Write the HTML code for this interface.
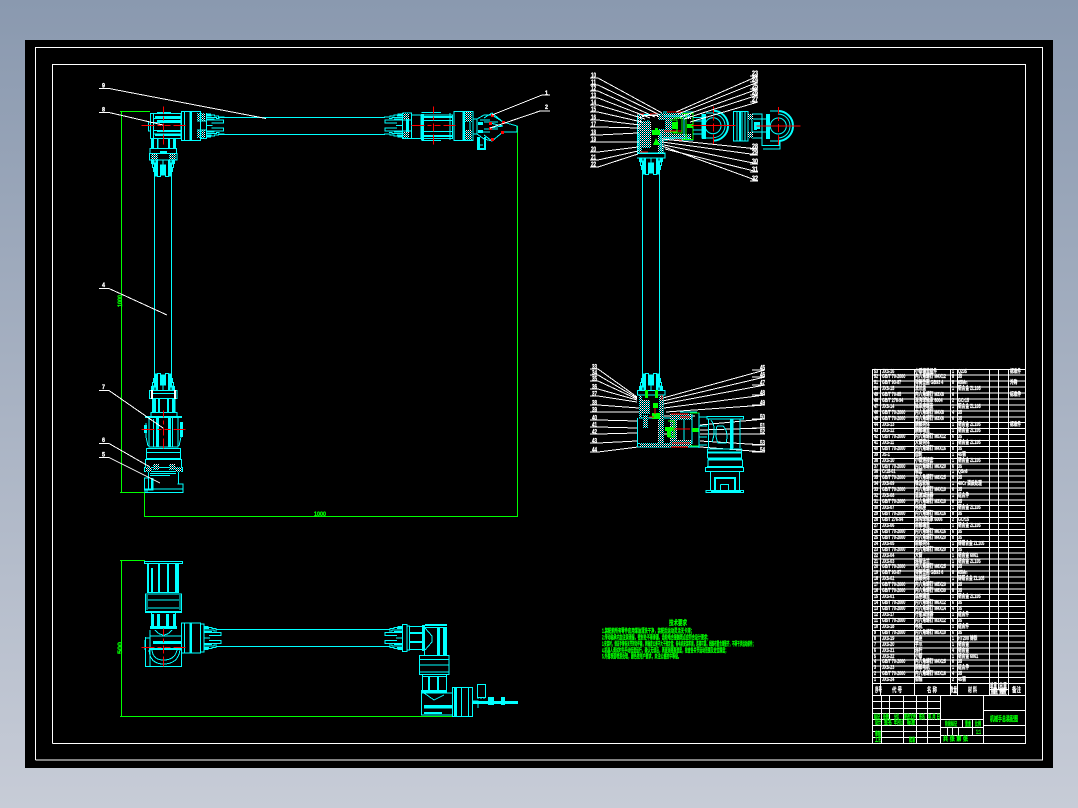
<!DOCTYPE html>
<html lang="zh"><head><meta charset="utf-8"><title>机械手总装配图</title>
<style>
html,body{margin:0;padding:0;width:1078px;height:808px;overflow:hidden;background:linear-gradient(#8a99af,#c7ccd7)}
svg{position:absolute;left:0;top:0}
.c{fill:none;stroke:#0ff;stroke-width:1}
.c2{fill:none;stroke:#0ff;stroke-width:2}
.f{fill:#0ff}
.w{fill:none;stroke:#fff;stroke-width:1}
.r{fill:none;stroke:#f00;stroke-width:1}
.g{fill:none;stroke:#0f0;stroke-width:1}
text{font-family:"Liberation Sans","Noto Sans CJK SC",sans-serif;font-weight:bold}
.l{fill:#fff;font-size:7px;stroke:#fff;stroke-width:.3px}
.s{fill:#fff;font-size:6px;stroke:#fff;stroke-width:.3px}
.t{fill:#0f0;font-size:6px;stroke:#0f0;stroke-width:.25px}
.h{fill:#fff;font-size:7px;stroke:#fff;stroke-width:.2px}
pre{position:absolute;margin:0;color:#fff;-webkit-text-stroke:.25px #fff;font:bold 5.4px/5.932px "Liberation Sans","Noto Sans CJK SC",sans-serif;transform:scaleX(.68);transform-origin:0 0;top:369.5px}
</style></head><body>
<svg width="1078" height="808" viewBox="0 0 1078 808" shape-rendering="crispEdges">
<defs>
<pattern id="ck" width="2" height="2" patternUnits="userSpaceOnUse"><rect width="2" height="2" fill="#000"/><rect width="1" height="1" fill="#fff"/><rect x="1" y="1" width="1" height="1" fill="#0ff"/></pattern>
<g id="fin">
<path class="c" d="M0-11.5H4V-10.5H8V-9.5H12V-8.5H18M0 11.5H4V10.5H8V9.5H12V8.5H18"/>
<path class="c" d="M0-8H10V-7H13M0 8H10V7H13M0-5.5H17V-2.5H5M0 5.5H17V2.5H5M0 0H6"/>
<rect class="f" x="0" y="-11" width="5" height="2"/><rect class="f" x="0" y="9" width="5" height="2"/>
<rect class="f" x="0" y="-7" width="8" height="1"/><rect class="f" x="0" y="6" width="8" height="1"/>
</g>
<g id="finb">
<use href="#fin"/>
<rect class="f" x="3" y="-9" width="14" height="3"/><rect class="f" x="3" y="6" width="14" height="3"/>
<rect class="f" x="5" y="-2" width="11" height="4"/>
</g>
<g id="boxh">
<rect class="c" x="0" y="0" width="19" height="29"/>
<path class="c" d="M3 0V29M8.5 0V29M10 0V29"/>
<rect class="f" x="8" y="0" width="2" height="29"/>
</g>
<g id="cross"><path class="r" d="M-22 0H-9M-6 0H-2M1 0H7M10 0H22M0-19V-12M0-9V-5M0-2V6M0 9V19"/></g>
</defs>

<rect x="25" y="40" width="1028" height="728" fill="#000"/>
<path class="w" d="M35.5 760V47.5H1042.5V760H35.5M52.5 743.5V64.5H1025.5V743.5H52.5"/>

<!-- dimension lines -->
<path class="g" d="M120 111.5H150M121.5 111V492.5M120 492.5H150M144.5 492V516.5H517.5V126M120 560.5H145M121.5 560V716.5M120 716.5H462"/>
<text class="t" x="0" y="0" transform="translate(122,307) rotate(-90)" textLength="12" lengthAdjust="spacingAndGlyphs">1000</text>
<text class="t" x="314" y="516" textLength="12" lengthAdjust="spacingAndGlyphs">1000</text>
<text class="t" x="0" y="0" transform="translate(122,654) rotate(-90)" textLength="12" lengthAdjust="spacingAndGlyphs">500</text>

<!-- ============ VIEW 1 ============ -->
<path class="c" d="M218 117.5H385M218 134.5H385M154.5 175V373M171.5 175V373"/>
<!-- left elbow -->
<path class="c" d="M150.5 113.5H181V138.5H150.5ZM153.5 113.5V138.5M148.5 122V131H150M153 118.5H181M153 122.5H181M153 130.5H181M153 134H181M157 112.5H171"/>
<rect class="f" x="155" y="116" width="26" height="2"/><rect class="f" x="157" y="120" width="24" height="2"/><rect class="f" x="157" y="130" width="24" height="2"/><rect class="f" x="155" y="134" width="26" height="2"/>
<use href="#boxh" transform="translate(181.5,111.5)"/>
<rect fill="url(#ck)" x="197" y="113" width="8" height="8"/><rect fill="url(#ck)" x="197" y="130" width="8" height="8"/>
<path class="c" d="M200.5 113V138.5H206.5V113M197 121H206M197 130H206"/>
<use href="#fin" transform="translate(206.5,125.7)"/>
<!-- neck -->
<path class="c" d="M151.5 139V148M175.5 139V148M158 139V148M169 139V148M150 148.5H176.5V153.5H150ZM149.5 153.5H177V160H149.5Z"/>
<rect class="f" x="151" y="139" width="3" height="9"/><rect class="f" x="157" y="139" width="1" height="9"/><rect class="f" x="168" y="139" width="2" height="9"/><rect class="f" x="173" y="139" width="2" height="9"/><rect class="f" x="160" y="151" width="7" height="2"/>
<rect fill="url(#ck)" x="151" y="154" width="7" height="6"/><rect fill="url(#ck)" x="169" y="154" width="7" height="6"/>
<use href="#finb" transform="translate(163,159.5) rotate(90)"/>
<!-- cross -->
<use href="#cross" transform="translate(163.5,125.5)"/>

<!-- right end -->
<use href="#fin" transform="translate(402,125.7) scale(-1,1)"/>
<path class="c" d="M402.5 113V138.5H411.5V113H402.5M402 120H412M402 131H412"/>
<rect class="f" x="406" y="113" width="3" height="26"/>
<rect fill="url(#ck)" x="403" y="113" width="6" height="6"/><rect fill="url(#ck)" x="403" y="132" width="6" height="6"/>
<path class="c" d="M412 115H452.5V138.5H412M421.5 112.5H441M421.5 140.5H441M421 115V138M423 115V138M450 113V140"/>
<rect class="f" x="421" y="114" width="3" height="26"/><rect class="f" x="424" y="116" width="28" height="2"/><rect class="f" x="424" y="120" width="28" height="1"/><rect class="f" x="424" y="131" width="28" height="1"/><rect class="f" x="424" y="135" width="28" height="2"/>
<use href="#boxh" transform="translate(473,111.5) scale(-1,1)"/>
<rect fill="url(#ck)" x="465" y="112" width="7" height="10"/><rect fill="url(#ck)" x="465" y="130" width="7" height="10"/>
<!-- gripper -->
<path class="c" d="M473 119H477V134H473M477 119L484 115H492L503 122L517 126V132L503 132L492 141L484 139L477 134M484 118L492 113L503 122M484 135L492 141L503 132M490 123L503 126L490 128M480 120H490M480 132H490M484 122H498M484 129H498"/>
<path class="c" d="M477.5 137V149.5H485.5V137M480 145H483"/>
<rect class="f" x="478" y="137" width="2" height="12"/><rect class="f" x="484" y="137" width="2" height="12"/><rect class="f" x="478" y="148" width="8" height="2"/><rect class="f" x="478" y="122" width="5" height="3"/><rect class="f" x="478" y="130" width="5" height="3"/>
<g fill="#f00"><rect x="491" y="114" width="3" height="3"/><rect x="502" y="121" width="3" height="3"/><rect x="489" y="122" width="3" height="3"/><rect x="489" y="127" width="3" height="3"/><rect x="501" y="131" width="3" height="3"/><rect x="491" y="138" width="3" height="3"/></g>
<use href="#cross" transform="translate(433.5,125.5)"/>

<!-- lower column view 1 -->
<use href="#finb" transform="translate(163,390.5) rotate(-90)"/>
<path class="c" d="M149.5 390.5H177V398.5H149.5ZM151 393.5H176M152.5 399V412M175 399V412M151 412.5H177V416.5H151Z"/>
<rect fill="#fff" x="151" y="390" width="2" height="9"/><rect fill="#fff" x="174" y="390" width="2" height="9"/>
<rect class="f" x="152" y="399" width="4" height="13"/><rect class="f" x="158" y="399" width="2" height="13"/><rect class="f" x="167" y="399" width="2" height="13"/><rect class="f" x="172" y="399" width="3" height="13"/>
<path class="c" d="M145 417H182M149 417V447H178V417M146 423V437L148 446M181 423V437L179 446"/>
<rect class="f" x="144" y="425" width="3" height="8"/><rect class="f" x="180" y="422" width="3" height="15"/><rect class="f" x="156" y="417" width="3" height="30"/><rect class="f" x="168" y="417" width="3" height="30"/><rect class="f" x="153" y="419" width="1" height="28"/><rect class="f" x="145" y="416" width="37" height="2"/><rect class="f" x="172" y="417" width="1" height="30"/>
<path class="c" d="M146.5 448.5H180.5V458.5H146.5ZM146 452.5H181M145.5 459.5H181.5V467.5H145.5ZM144.5 467.5H182.5V471.5H144.5Z"/>
<rect fill="url(#ck)" x="153" y="464" width="6" height="6"/><rect fill="url(#ck)" x="169" y="464" width="6" height="6"/><rect fill="url(#ck)" x="146" y="467" width="6" height="5"/><rect fill="url(#ck)" x="175" y="467" width="7" height="5"/>
<path class="c" d="M148.5 472V489M178.5 472V484M150 475.5H170M150 473.5H176M149 478H144.5V490H153V478M177.5 484H183V492.5H145V489H183M147 490V492"/>
<rect class="f" x="151" y="478" width="2" height="11"/>
<use href="#cross" transform="translate(163.5,429.5)"/>

<!-- ============ VIEW 3 (bottom left) ============ -->
<path class="c" d="M221 629.5H385M221 646.5H385"/>
<path class="c" d="M144.5 561.5H182.5V563.5H144.5ZM147.5 564V592.5M178.5 564V592.5M148 592.5H178M145.5 594H181.5V612.5H145.5ZM147 595V610M180 595V610M148 600H179M148 608H179M151.5 613V626M175.5 613V626"/>
<rect class="f" x="147" y="564" width="2" height="29"/><rect class="f" x="151" y="568" width="2" height="25"/><rect class="f" x="158" y="564" width="2" height="28"/><rect class="f" x="167" y="564" width="2" height="28"/><rect class="f" x="175" y="564" width="4" height="29"/><rect class="f" x="157" y="614" width="3" height="12"/><rect class="f" x="166" y="614" width="3" height="12"/><rect class="f" x="173" y="614" width="3" height="12"/><rect class="f" x="152" y="614" width="2" height="12"/><rect class="f" x="150" y="626" width="27" height="3"/><rect class="f" x="146" y="611" width="35" height="2"/>
<path class="c" d="M145.5 637V666.5H181.5V630M145.5 638H150V630M150 636H181M145 640V650M150 632V666M155 630Q163.5 640 172 630M149 650Q150 664 163.5 664Q178 664 180 650M152 650Q153 660 163.5 660Q175 660 177 650"/>
<rect class="f" x="153" y="641" width="28" height="3"/><rect class="f" x="149" y="648" width="32" height="2"/>
<use href="#boxh" transform="translate(181.5,623) scale(1,1.03)"/>
<path class="c" d="M200 624H204V652H200"/>
<use href="#fin" transform="translate(204,637.8)"/>
<use href="#cross" transform="translate(163.5,647.5)"/>

<use href="#fin" transform="translate(402,637.8) scale(-1,1)"/>
<path class="c" d="M402.5 624.5H407V651.5H402.5ZM407 626H409.5V650H407M409 626.5H422M409 632.5H422M409 641.5H422M409 649.5H422"/>
<rect class="f" x="410" y="632" width="12" height="2"/><rect class="f" x="410" y="641" width="12" height="2"/><rect class="f" x="422" y="625" width="3" height="26"/><rect class="f" x="425" y="624" width="22" height="2"/><rect class="f" x="437" y="628" width="3" height="27"/><rect class="f" x="443" y="628" width="3" height="27"/>
<path class="c" d="M425 627.5H446.5V655M424.5 628V655M425 628L432 636V642L425 650"/>
<path class="c" d="M419.5 655.5H449V674.5H419.5ZM419 659.5H449M419 665H449M419 672H449M422.5 675V690M446.5 675V690M422 676.5H447"/>
<rect class="f" x="428" y="676" width="2" height="14"/><rect class="f" x="437" y="676" width="2" height="14"/><rect class="f" x="421" y="690" width="26" height="3"/>
<path class="c" d="M421.5 693V715H452M452 693H421M424 693L434 700L444 695M424 708H452"/>
<rect class="f" x="424" y="705" width="28" height="3"/><rect class="f" x="424" y="712" width="18" height="2"/>
<path class="c" d="M452.5 687.5H472.5V716.5H452.5ZM455 688V716M456.5 688V716M461.5 688V716M468.5 688V716"/>
<rect class="f" x="454" y="688" width="2" height="29"/>
<path class="c" d="M477.5 684.5H485.5V697.5H477.5ZM478 699V697M481 699V697M484 699V697M473 701H478V708"/>
<rect class="f" x="473" y="701" width="45" height="3"/><rect class="f" x="488" y="697" width="6" height="8"/><rect class="f" x="501" y="697" width="4" height="8"/><rect class="f" x="516" y="701" width="2" height="2"/>

<!-- ============ VIEW 2 top ============ -->
<path class="c" d="M642.5 175V373M659.5 175V373"/>
<!-- head -->
<path class="c" d="M637.5 114.5H663V153H637.5ZM640 131H663M648 120V125M663 112H693V140H663"/>
<rect x="638" y="115" width="26" height="2" fill="#fff"/>
<rect fill="url(#ck)" x="642" y="121" width="9" height="27"/>
<rect fill="url(#ck)" x="638" y="115" width="4" height="38"/>
<rect fill="url(#ck)" x="658" y="115" width="5" height="38"/>
<rect fill="url(#ck)" x="661" y="113" width="30" height="6"/>
<rect fill="url(#ck)" x="661" y="134" width="30" height="6"/>
<rect fill="url(#ck)" x="663" y="119" width="9" height="15"/>
<rect fill="#000" x="644" y="116" width="13" height="4"/>
<rect fill="#000" x="657" y="120" width="8" height="9"/>
<path class="c" d="M639 133V151M661 133V151M664 116H690M664 138H690M684 118V136"/>
<path class="r" d="M667 112H683M664 131H682M668 140H682M637 114H644M650 114H658M640 152H648"/>
<path class="g" d="M670 120H677V132H670M674 118H682V133H673M682 113.5H693V139.5H682M686 114V139"/>
<g fill="#0f0"><rect x="652" y="130" width="8" height="5"/><rect x="655" y="128" width="3" height="2"/><path d="M656 138L660 145H653Z"/><rect x="672" y="122" width="6" height="7"/><rect x="687" y="124" width="6" height="4"/></g>
<path class="c" d="M637 153H665V158H637"/>
<rect class="f" x="637" y="153" width="28" height="1"/>
<use href="#finb" transform="translate(651,157.5) rotate(90)"/>
<!-- right side -->
<path class="c" d="M693 117.5H702M693 134H702M693 121H702M693 130H702M702 114V138.5M706 113H713M706 138H713"/>
<rect class="f" x="702" y="114" width="4" height="25"/>
<g shape-rendering="auto">
<path class="c2" d="M713 110.7A15 15 0 0 1 713 140.7"/>
<path class="c" d="M713 113.7A12 12 0 0 1 713 137.7"/>
<circle class="c" cx="713" cy="125.7" r="8"/>
</g>
<path class="c" d="M733.5 111.5H748V141H733.5ZM737 112V141M742 112V141M745 112V141M748 116H752V137H748M752 114H762V138H752M752 119H766M752 132H766"/>
<rect class="f" x="739" y="112" width="2" height="29"/><rect class="f" x="754" y="122" width="3" height="8"/><rect class="f" x="766" y="114" width="4" height="25"/>
<path class="r" d="M748 116H753M748 136H753"/>
<rect fill="url(#ck)" x="748" y="114" width="5" height="6"/><rect fill="url(#ck)" x="748" y="132" width="5" height="6"/>
<g shape-rendering="auto">
<path class="c2" d="M778 111A15 15 0 0 1 778 141"/>
<path class="c" d="M778 114A12 12 0 0 1 778 138"/>
<circle class="c" cx="778.3" cy="126" r="8"/>
</g>
<path class="c" d="M770 111H778M770 141H778M762 138V145.5H779V140M763 149H780V140"/>
<rect class="f" x="755" y="122" width="5" height="7"/>
<use href="#cross" transform="translate(713.5,125.5)"/>
<use href="#cross" transform="translate(778.5,126)"/>
<path class="r" d="M693 125.5H735M757 126H800"/>

<!-- leaders top -->
<path class="w" d="M99 88.5H109L266 118.5M99 112.5H109L163 125M542 95H550M542 95L492 115M540 111H550M540 111L490 128"/>
<path class="w" d="M590 78H598L662 113M590 85H598L660 115M590 91H598L655 117M590 98H598L650 118M590 105H598L645 119M590 112H598L642 122M590 120H598L640 125M590 127H598L640 128M590 135H598L638 133M590 142H598L639 142M590 152H598L638 147M590 160H598L638 151M590 167H598L638 154"/>
<path class="w" d="M750 76H758L676 112M750 82H758L678 114M750 89H758L680 117M750 95H758L684 119M750 102H758L690 122M750 149H758L662 139M750 155H758L662 142M750 164H758L664 145M750 172H758L665 149M750 181H758L662 146"/>
<path class="w" d="M99 288.5H109L167 315M99 390.5H109L163 428M99 443.5H109L150 467M99 457.5H109L160 483"/>
<path class="w" d="M590 369H598L637 397M590 375H598L637 398M590 381H598L637 399M590 389H598L637 400M590 396H598L637 402M590 405H598L639 408M590 412H598L639 412M590 420H598L637 421M590 427H598L637 428M590 434H598L637 433M590 443H598L637 441M590 452H598L638 447"/>
<path class="w" d="M752 370H765L663 398M752 377H765L663 401M752 385H765L663 404M752 395H765L664 408M752 405H765L666 412M752 419H765L700 425M752 428H765L700 430M752 434H765L700 434M752 445H765L700 441M752 452H765L700 447"/>

<!-- labels -->
<g class="labels">
<text class="s" x="102" y="87.5" textLength="3" lengthAdjust="spacingAndGlyphs">9</text>
<text class="s" x="102" y="111.5" textLength="3" lengthAdjust="spacingAndGlyphs">8</text>
<text class="s" x="102" y="287" textLength="3" lengthAdjust="spacingAndGlyphs">4</text>
<text class="s" x="102" y="389" textLength="3" lengthAdjust="spacingAndGlyphs">7</text>
<text class="s" x="102" y="442" textLength="3" lengthAdjust="spacingAndGlyphs">6</text>
<text class="s" x="102" y="456.5" textLength="3" lengthAdjust="spacingAndGlyphs">5</text>
<text class="s" x="545" y="95" textLength="3" lengthAdjust="spacingAndGlyphs">1</text>
<text class="s" x="545" y="109" textLength="3" lengthAdjust="spacingAndGlyphs">2</text>
<text class="l" x="591" y="77.5" textLength="5" lengthAdjust="spacingAndGlyphs">10</text>
<text class="l" x="591" y="84.5" textLength="5" lengthAdjust="spacingAndGlyphs">11</text>
<text class="l" x="591" y="90.5" textLength="5" lengthAdjust="spacingAndGlyphs">12</text>
<text class="l" x="591" y="97.5" textLength="5" lengthAdjust="spacingAndGlyphs">13</text>
<text class="l" x="591" y="104.5" textLength="5" lengthAdjust="spacingAndGlyphs">14</text>
<text class="l" x="591" y="111.5" textLength="5" lengthAdjust="spacingAndGlyphs">15</text>
<text class="l" x="591" y="119.5" textLength="5" lengthAdjust="spacingAndGlyphs">16</text>
<text class="l" x="591" y="126.5" textLength="5" lengthAdjust="spacingAndGlyphs">17</text>
<text class="l" x="591" y="134.5" textLength="5" lengthAdjust="spacingAndGlyphs">18</text>
<text class="l" x="591" y="141.5" textLength="5" lengthAdjust="spacingAndGlyphs">19</text>
<text class="l" x="591" y="151.5" textLength="5" lengthAdjust="spacingAndGlyphs">20</text>
<text class="l" x="591" y="159.5" textLength="5" lengthAdjust="spacingAndGlyphs">21</text>
<text class="l" x="591" y="166.5" textLength="5" lengthAdjust="spacingAndGlyphs">22</text>
<text class="l" x="752" y="75.5" textLength="6" lengthAdjust="spacingAndGlyphs">23</text>
<text class="l" x="752" y="81.5" textLength="6" lengthAdjust="spacingAndGlyphs">24</text>
<text class="l" x="752" y="88.5" textLength="6" lengthAdjust="spacingAndGlyphs">25</text>
<text class="l" x="752" y="94.5" textLength="6" lengthAdjust="spacingAndGlyphs">26</text>
<text class="l" x="752" y="101.5" textLength="6" lengthAdjust="spacingAndGlyphs">27</text>
<text class="l" x="752" y="148.5" textLength="6" lengthAdjust="spacingAndGlyphs">28</text>
<text class="l" x="752" y="154.5" textLength="6" lengthAdjust="spacingAndGlyphs">29</text>
<text class="l" x="752" y="163.5" textLength="6" lengthAdjust="spacingAndGlyphs">30</text>
<text class="l" x="752" y="171.5" textLength="6" lengthAdjust="spacingAndGlyphs">31</text>
<text class="l" x="752" y="180.5" textLength="6" lengthAdjust="spacingAndGlyphs">32</text>
<text class="l" x="592" y="369" textLength="5" lengthAdjust="spacingAndGlyphs">33</text>
<text class="l" x="592" y="375" textLength="5" lengthAdjust="spacingAndGlyphs">34</text>
<text class="l" x="592" y="381" textLength="5" lengthAdjust="spacingAndGlyphs">35</text>
<text class="l" x="592" y="389" textLength="5" lengthAdjust="spacingAndGlyphs">36</text>
<text class="l" x="592" y="396" textLength="5" lengthAdjust="spacingAndGlyphs">37</text>
<text class="l" x="592" y="405" textLength="5" lengthAdjust="spacingAndGlyphs">38</text>
<text class="l" x="592" y="412" textLength="5" lengthAdjust="spacingAndGlyphs">39</text>
<text class="l" x="592" y="420" textLength="5" lengthAdjust="spacingAndGlyphs">40</text>
<text class="l" x="592" y="427" textLength="5" lengthAdjust="spacingAndGlyphs">41</text>
<text class="l" x="592" y="434" textLength="5" lengthAdjust="spacingAndGlyphs">42</text>
<text class="l" x="592" y="443" textLength="5" lengthAdjust="spacingAndGlyphs">43</text>
<text class="l" x="592" y="452" textLength="5" lengthAdjust="spacingAndGlyphs">44</text>
<text class="l" x="760" y="370" textLength="5" lengthAdjust="spacingAndGlyphs">45</text>
<text class="l" x="760" y="377" textLength="5" lengthAdjust="spacingAndGlyphs">46</text>
<text class="l" x="760" y="385" textLength="5" lengthAdjust="spacingAndGlyphs">47</text>
<text class="l" x="760" y="395" textLength="5" lengthAdjust="spacingAndGlyphs">48</text>
<text class="l" x="760" y="405" textLength="5" lengthAdjust="spacingAndGlyphs">49</text>
<text class="l" x="760" y="419" textLength="5" lengthAdjust="spacingAndGlyphs">50</text>
<text class="l" x="760" y="428" textLength="5" lengthAdjust="spacingAndGlyphs">51</text>
<text class="l" x="760" y="434" textLength="5" lengthAdjust="spacingAndGlyphs">52</text>
<text class="l" x="760" y="445" textLength="5" lengthAdjust="spacingAndGlyphs">53</text>
<text class="l" x="760" y="452" textLength="5" lengthAdjust="spacingAndGlyphs">54</text>
</g>

<!-- ============ VIEW 4 lower right ============ -->
<use href="#finb" transform="translate(651,390.5) rotate(-90)"/>
<path class="c" d="M637.5 390.5H665V395H637.5ZM639.5 395V418H663V395M637.5 418V447M637.5 443.5H670M637.5 447H670M663 418H670"/>
<rect fill="url(#ck)" x="641" y="400" width="9" height="14"/>
<rect fill="url(#ck)" x="639" y="396" width="3" height="22"/>
<rect fill="url(#ck)" x="659" y="396" width="4" height="22"/>
<rect fill="url(#ck)" x="643" y="415" width="5" height="13"/>
<rect fill="url(#ck)" x="658" y="417" width="6" height="26"/>
<rect fill="url(#ck)" x="640" y="443" width="30" height="4"/>
<g fill="#0f0"><rect x="645" y="390" width="3" height="8"/><rect x="655" y="390" width="3" height="8"/><rect x="653" y="403" width="5" height="5"/><rect x="652" y="413" width="8" height="6"/></g>
<path class="r" d="M655 408V414M662 395V400M649 417H654"/>
<path class="w" d="M664 416H695M666 430H672M664 434H672"/>
<rect fill="url(#ck)" x="670" y="414" width="22" height="6"/>
<rect fill="url(#ck)" x="670" y="440" width="22" height="7"/>
<rect fill="url(#ck)" x="670" y="420" width="7" height="20"/>
<rect fill="#000" x="677" y="422" width="7" height="17"/>
<path class="c" d="M680 412H697M684 420V440M692 414V444M670 447H700"/>
<path class="r" d="M671 414H688M680 417H690M671 429H690M672 443H690M671 447H688"/>
<path class="g" d="M668 421H674V437H668M690 413H699V446H690"/>
<g fill="#0f0"><rect x="665" y="427" width="8" height="4"/><rect x="667" y="431" width="4" height="6"/><rect x="692" y="428" width="7" height="4"/></g>
<path class="c" d="M699 417H707M699 426H707M699 437H707M699 445H707M699 413V448"/>
<path class="c" d="M707 416.5H743.5V419H707ZM708.5 419V448M740 419V448M733 419V448M711 420Q717 428 712 442M717 426H723Q729 432 726 443H718Q714 434 717 426"/>
<rect class="f" x="730" y="419" width="3" height="30"/>
<path class="c" d="M707.5 449H741.5V458H707.5ZM707 452H742M708 453H741"/>
<rect class="f" x="708" y="458" width="34" height="2"/>
<path class="c" d="M708 460H742.5V467H708ZM705.5 467.5H743.5V471.5H705.5Z"/>
<rect class="f" x="707" y="466" width="36" height="2"/>
<path class="c" d="M710.5 472V490M739.5 472V490"/>
<rect class="f" x="714" y="477" width="22" height="2"/><rect class="f" x="714" y="479" width="2" height="11"/><rect class="f" x="734" y="479" width="2" height="11"/><rect class="f" x="711" y="490" width="30" height="2"/>
<path class="c" d="M720.5 484.5H728.5V490M720.5 490V484.5M706 490.5H743.5V492.5H706Z"/>

<!-- tech notes -->
<text x="669" y="625" style="fill:#0f0;font-size:7px;stroke:#0f0;stroke-width:.25px" textLength="18" lengthAdjust="spacingAndGlyphs">技术要求</text>
<text class="t" x="602" y="633" textLength="92" lengthAdjust="spacingAndGlyphs">1.装配前所有零件应用煤油清洗干净，装配后运动灵活无卡滞；</text>
<text class="t" x="602" y="639.5" textLength="108" lengthAdjust="spacingAndGlyphs">2.传动轴承内加注润滑脂，密封处不得渗漏，齿轮啮合接触斑点应符合设计要求；</text>
<text class="t" x="602" y="646" textLength="153" lengthAdjust="spacingAndGlyphs">3.安装时，保证手臂各关节转动平稳，同轴度公差不大于规定值；各电机安装牢固，连接可靠，线路布置合理整齐，不得干涉运动部件；</text>
<text class="t" x="602" y="652.5" textLength="126" lengthAdjust="spacingAndGlyphs">4.机器人调试时先手动低速运行，确认无误后，再逐渐提高速度，检查各关节运动范围及定位精度；</text>
<text class="t" x="602" y="658.5" textLength="79" lengthAdjust="spacingAndGlyphs">5.外露表面喷漆处理，颜色按用户要求，未注公差按中等级。</text>

<!-- BOM grid -->
<path class="w" d="M872.5 369.5H1025M872 375.2H1025M872 381.2H1025M872 387.1H1025M872 393H1025M872 399H1025M872 404.9H1025M872 410.8H1025M872 416.8H1025M872 422.7H1025M872 428.6H1025M872 434.6H1025M872 440.5H1025M872 446.4H1025M872 452.3H1025M872 458.3H1025M872 464.2H1025M872 470.1H1025M872 476.1H1025M872 482H1025M872 487.9H1025M872 493.9H1025M872 499.8H1025M872 505.7H1025M872 511.7H1025M872 517.6H1025M872 523.5H1025M872 529.5H1025M872 535.4H1025M872 541.3H1025M872 547.3H1025M872 553.2H1025M872 559.1H1025M872 565H1025M872 571H1025M872 576.9H1025M872 582.8H1025M872 588.8H1025M872 594.7H1025M872 600.6H1025M872 606.6H1025M872 612.5H1025M872 618.4H1025M872 624.4H1025M872 630.3H1025M872 636.2H1025M872 642.2H1025M872 648.1H1025M872 654H1025M872 660H1025M872 665.9H1025M872 671.8H1025M872 677.7H1025M872 683.7H1025"/>
<path class="w" d="M872.5 369V743.5M880.5 369V695M914.5 369V695M950.5 369V695M957.5 369V695M989.5 369V695M998.5 369V689M1008.5 369V695M872 695.5H1025"/>
<path class="w" d="M989 689.5H1008"/>
<!-- title block -->
<path class="w" d="M872 701.5H940M872 708.5H940M872 713.5H940M872 719.5H940M872 725.5H940M872 731.5H940M872 737.5H940M881.5 695V743M889.5 695V719M903.5 695V743M916.5 695V743M927.5 695V743M940.5 695V743M983.5 695V743M940 719.5H983M940 727.5H983M940 735.5H983M962.5 719V727M972.5 719V735M947.5 727V735M952.5 727V735M958.5 727V735M983 710.5H1025M983 725.5H1025M983 735.5H1025"/>
<g>
<text class="h" x="875" y="692" textLength="7" lengthAdjust="spacingAndGlyphs">序号</text>
<text class="h" x="892" y="692" textLength="10" lengthAdjust="spacingAndGlyphs">代 号</text>
<text class="h" x="927" y="692" textLength="10" lengthAdjust="spacingAndGlyphs">名 称</text>
<text class="h" x="950" y="692" textLength="7" lengthAdjust="spacingAndGlyphs">数量</text>
<text class="h" x="968" y="692" textLength="9" lengthAdjust="spacingAndGlyphs">材 料</text>
<text class="h" x="990" y="688" textLength="7" lengthAdjust="spacingAndGlyphs">单重</text>
<text class="h" x="999" y="688" textLength="8" lengthAdjust="spacingAndGlyphs">总重</text>
<text class="h" x="1012" y="692" textLength="9" lengthAdjust="spacingAndGlyphs">备注</text>
<text class="h" x="990" y="694" style="font-size:6px" textLength="17" lengthAdjust="spacingAndGlyphs">重量</text>
<text class="t" x="874" y="719" textLength="6" lengthAdjust="spacingAndGlyphs">标记</text>
<text class="t" x="883" y="719" textLength="6" lengthAdjust="spacingAndGlyphs">处数</text>
<text class="t" x="894" y="719" textLength="5" lengthAdjust="spacingAndGlyphs">分区</text>
<text class="t" x="904" y="719" textLength="12" lengthAdjust="spacingAndGlyphs">更改文件</text>
<text class="t" x="919" y="719" textLength="6" lengthAdjust="spacingAndGlyphs">签名</text>
<text class="t" x="928" y="719" textLength="12" lengthAdjust="spacingAndGlyphs">年 月 日</text>
<text class="t" x="875" y="724.5" textLength="6" lengthAdjust="spacingAndGlyphs">设计</text>
<text class="t" x="884" y="724.5" textLength="8" lengthAdjust="spacingAndGlyphs">签名</text>
<text class="t" x="894" y="724.5" textLength="9" lengthAdjust="spacingAndGlyphs">年月日</text>
<text class="t" x="907" y="724.5" textLength="8" lengthAdjust="spacingAndGlyphs">标准</text>
<text class="t" x="875" y="736" textLength="6" lengthAdjust="spacingAndGlyphs">审核</text>
<text class="t" x="875" y="742" textLength="6" lengthAdjust="spacingAndGlyphs">工艺</text>
<text class="t" x="909" y="742" textLength="6" lengthAdjust="spacingAndGlyphs">批准</text>
<text class="t" x="945" y="726" textLength="12" lengthAdjust="spacingAndGlyphs">阶段标记</text>
<text class="t" x="965" y="726" textLength="6" lengthAdjust="spacingAndGlyphs">重量</text>
<text class="t" x="975" y="726" textLength="6" lengthAdjust="spacingAndGlyphs">比例</text>
<text class="t" x="976" y="734" textLength="5" lengthAdjust="spacingAndGlyphs">1:1</text>
<text class="t" x="943" y="741" textLength="25" lengthAdjust="spacingAndGlyphs">共 张 第 张</text>
<text x="990" y="721" style="fill:#0f0;font-size:7px;stroke:#0f0;stroke-width:.25px" textLength="28" lengthAdjust="spacingAndGlyphs">机械手总装配图</text>
</g>
</svg>

<pre style="left:874px">53
52
51
50
49
48
47
46
45
44
43
42
41
40
39
38
37
36
35
34
33
32
31
30
29
28
27
26
25
24
23
22
21
20
19
18
17
16
15
14
13
12
11
10
9
8
7
6
5
4
3
2
1</pre>
<pre style="left:882px">JXS-16
GB/T 70-2000
GB/T 93-87
JXS-15
GB/T 70-85
GB/T 276-94
JXS-14
GB/T 70-2000
GB/T 70-2000
JXS-13
JXS-12
GB/T 70-2000
JXS-11
GB/T 70-2000
JS-1
JXS-10
GB/T 70-2000
Cr15-01
GB/T 70-2000
JXS-09
GB/T 70-2000
JXS-08
GB/T 70-2000
JXS-07
GB/T 70-2000
GB/T 276-94
JXS-06
GB/T 70-2000
GB/T 70-2000
JXS-05
GB/T 70-2000
JXS-04
JXS-03
GB/T 70-2000
GB/T 93-87
JXS-02
GB/T 70-2000
GB/T 70-2000
JXS-01
GB/T 70-2000
GB/T 70-2000
JXS-17
GB/T 70-2000
JXS-18
GB/T 70-2000
JXS-19
JXS-20
JXS-21
JXS-22
GB/T 70-2000
JXS-23
GB/T 70-2000
JXS-24</pre>
<pre style="left:915px">小臂端盖组件
内六角螺钉 M4X12
弹簧垫圈 GB93 4
法兰盘
内六角螺钉 M3X8
深沟球轴承 6004
轴承座端盖
内六角螺钉 M4X8
内六角螺钉 M3X6
腕部壳体
腕部端盖
内六角螺钉 M5X12
大臂壳体
内六角螺钉 M4X16
齿轮
小臂连接套
内六角螺钉 M6X20
轴套
内六角螺钉 M8X25
锥齿轮轴
内六角螺钉 M4X10
谐波减速器
内六角螺钉 M3X10
电机座
内六角螺钉 M5X16
深沟球轴承 6006
肩部端盖
内六角螺钉 M6X16
内六角螺钉 M4X20
肩部壳体
内六角螺钉 M8X20
大臂
连接法兰
内六角螺钉 M6X25
弹簧垫圈 GB93 6
腰部壳体
内六角螺钉 M5X20
内六角螺钉 M8X30
底座端盖
内六角螺钉 M6X12
内六角螺钉 M4X14
行星减速器
内六角螺钉 M3X12
电机
内六角螺钉 M5X10
底座
手爪
连杆
小臂
内六角螺钉 M4X25
腕部电机
内六角螺钉 M3X16
销轴</pre>
<pre style="left:952px">1
8
8
1
6
2
1
4
6
1
1
6
1
8
1
1
6
1
8
1
6
1
6
1
8
2
1
6
8
1
8
1
1
8
8
1
6
8
1
6
4
1
6
1
6
1
1
4
1
6
1
4
2</pre>
<pre style="left:958px">Q235
35
65Mn
铝合金 ZL105

GCr15
铝合金 ZL105
35
35
铝合金 ZL105
铝合金 ZL105
35
铝合金 ZL105
35
45钢
铝合金 ZL105
35
QSn6
35
40Cr 调质处理
35
组合件
35
铝合金 ZL105
35
GCr15
铝合金 ZL105
35
35
铸铝合金 ZL105
35
铝合金 6061
铝合金 ZL105
35
65Mn
铸铝合金 ZL105
35
35
铝合金 ZL105
35
35
组合件
35
组合件
35
HT200 铸铁
铝合金
铝合金
铝合金 6061
35
组合件
35
45钢</pre>
<pre style="left:1010px">
标准件

外购

标准件




标准件
</pre>
</body></html>
